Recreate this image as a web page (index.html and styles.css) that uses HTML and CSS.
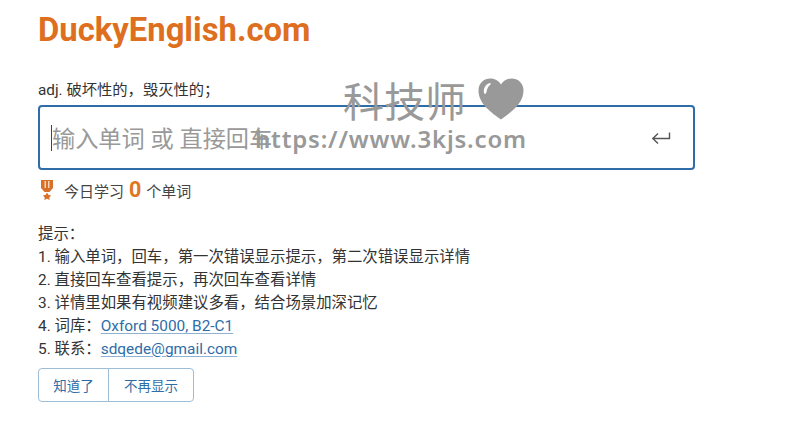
FILE: index.html
```html
<!DOCTYPE html>
<html lang="zh">
<head>
<meta charset="utf-8">
<title>DuckyEnglish.com</title>
<link rel="stylesheet" href="styles.css">
</head>
<body>
<main class="page">
  <h1 class="logo">DuckyEnglish.com</h1>
  <p class="meaning">adj. 破坏性的，毁灭性的；</p>
  <div class="entry">
    <span class="caret"></span>
    <input class="word" type="text" placeholder="输入单词 或 直接回车">
    <svg class="enter" width="20" height="14" viewBox="0 0 20 14" fill="none" stroke="#555" stroke-width="1.4"><path d="M18.500 1.500V7.500H2M7 2.500L1.800 7.500L7 12.500"/></svg>
  </div>
  <div class="today">
    <svg class="medal" width="12" height="20" viewBox="0 0 12 20"><path fill="#d9702a" d="M0 0h12v8L8.500 12h-5L0 8z"/><path fill="#f4d3b8" d="M3.500 1h1.500v7H3.500zM7 1h1.500v7H7z"/><path fill="#d9702a" d="M6 12.500l1.600 2.500 2.600.5-1.900 1.900.4 2.600L6 18.800 3.300 20l.4-2.600-1.900-1.900 2.600-.5z"/></svg>
    <span>今日学习</span>
    <b class="count">0</b>
    <span>个单词</span>
  </div>
  <div class="tips">
    <div>提示：</div>
    <div>1. 输入单词，回车，第一次错误显示提示，第二次错误显示详情</div>
    <div>2. 直接回车查看提示，再次回车查看详情</div>
    <div>3. 详情里如果有视频建议多看，结合场景加深记忆</div>
    <div>4. 词库：<a href="#">Oxford 5000, B2-C1</a></div>
    <div>5. 联系：<a href="#">sdqede@gmail.com</a></div>
  </div>
  <div class="actions">
    <button class="btn" type="button">知道了</button>
    <button class="btn" type="button">不再显示</button>
  </div>
</main>
<div class="watermark">
  <div class="wm-top">
    <span class="wm-name">科技师</span>
    <svg width="46" height="42" viewBox="0 0 46 42"><path fill="#999" d="M23 41.500C14 35 0.500 26 0.500 12.500 0.500 5 6 0.500 12.500 0.500c4.500 0 8.500 2.500 10.500 6C25 3 29 0.500 33.500 0.500 40 0.500 45.500 5 45.500 12.500 45.500 26 32 35 23 41.500z"/><path fill="#fff" d="M6 15c-1-5 2-9 6-10 1 0 1 1 0 2-2 1.500-3 4-3.500 7-.5 2-2 2.500-2.500 1z"/></svg>
  </div>
  <div class="wm-url">https://www.3kjs.com</div>
</div>
</body>
</html>
```

FILE: styles.css
```css
* { box-sizing: border-box; }
html, body { margin: 0; padding: 0; background: #fff; overflow: hidden; }
body {
  position: relative;
  width: 800px;
  height: 434px;
  font-family: Roboto, "Noto Sans CJK SC", sans-serif;
  color: #333;
}
.page { padding: 11px 0 0 38px; width: 695px; }
.logo {
  margin: 0;
  font-size: 32.800px;
  line-height: 38px;
  font-weight: 700;
  color: #de6f20;
}
.meaning {
  margin: 31px 0 0;
  font-size: 15.300px;
  line-height: 20px;
  color: #333;
}
.entry {
  display: flex;
  align-items: center;
  height: 65px;
  margin-top: 5px;
  padding: 0 22px 0 11px;
  border: 2px solid #2f6da8;
  border-radius: 4px;
  background: #fff;
}
.caret { width: 1px; height: 26px; background: #444; flex: none; }
.word {
  flex: 1;
  min-width: 0;
  border: 0;
  outline: 0;
  padding: 2px 0 0;
  font-family: Roboto, "Noto Sans CJK SC", sans-serif;
  font-size: 23.200px;
  background: transparent;
}
.word::placeholder { color: #999; opacity: 1; }
.enter { flex: none; }
.today {
  display: flex;
  align-items: center;
  gap: 5px;
  height: 24px;
  margin-top: 8px;
  font-size: 15px;
  color: #444;
}
.medal { margin: 0 6px 0 3px; }
.count { font-size: 21.500px; line-height: 24px; font-weight: 700; color: #e0761f; }
.tips {
  margin-top: 21px;
  font-size: 15.400px;
  line-height: 23px;
  color: #333;
}
.tips a { color: #2f6da8; text-decoration: underline; text-underline-offset: 2px; text-decoration-thickness: 1px; text-decoration-color: #8fb2d2; }
.actions { display: flex; margin-top: 7px; }
.btn {
  height: 34px;
  padding: 0;
  border: 1px solid #9dbdd6;
  background: #fff;
  color: #2f6da8;
  font-family: Roboto, "Noto Sans CJK SC", sans-serif;
  font-size: 13.500px;
}
.btn:first-child { width: 71px; border-radius: 4px 0 0 4px; }
.btn:last-child { width: 86px; margin-left: -1px; border-radius: 0 4px 4px 0; }
.watermark {
  position: absolute;
  left: 255px;
  top: 78px;
  width: 280px;
  pointer-events: none;
}
.wm-top { display: flex; align-items: center; gap: 12px; margin-left: 88px; height: 42px; }
.wm-name { font-size: 41px; line-height: 42px; color: #999; font-family: "Noto Sans CJK SC", sans-serif; }
.wm-url {
  margin-top: 3px;
  font-family: "Noto Sans", sans-serif;
  font-size: 24px;
  letter-spacing: 0.800px;
  line-height: 32px;
  color: #999;
  font-weight: 600;
  white-space: nowrap;
}
```
